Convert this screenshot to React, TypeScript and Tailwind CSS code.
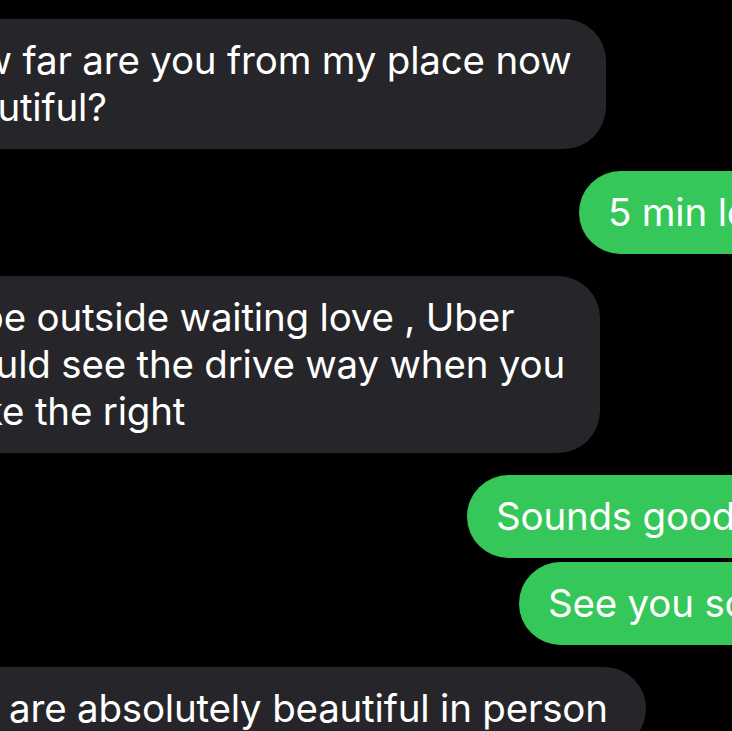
import React from "react";

type Line = { text: string; shift: number };

function Incoming({ lines, right }: { lines: Line[]; right: number }) {
  // bubble starts off-screen on the left, like the cropped screenshot
  return (
    <div
      className="shrink-0 self-start -ml-[100px] rounded-[42px] bg-[#262529] py-[18px] pl-[30px] overflow-hidden"
      style={{ width: right + 100 }}
    >
      {lines.map((l, i) => (
        <div key={i} className="whitespace-nowrap" style={{ marginLeft: l.shift }}>
          {l.text}
        </div>
      ))}
    </div>
  );
}

function Outgoing({ text, left }: { text: string; left: number }) {
  return (
    <div
      className="shrink-0 rounded-[42px] bg-[#35c759] py-[18px] pl-[29px] pr-[60px] whitespace-nowrap"
      style={{ marginLeft: left }}
    >
      {text}
    </div>
  );
}

export default function App() {
  return (
    <div
      className="w-[732px] h-[731px] overflow-hidden bg-black text-white flex flex-col pt-[19px]"
      style={{ fontFamily: "Inter, 'Noto Sans', sans-serif", fontSize: 38.5, lineHeight: "47px", letterSpacing: "-0.2px" }}
    >
      <Incoming
        right={606}
        lines={[
          { text: "How far are you from my place now", shift: 0 },
          { text: "beautiful?", shift: 0 },
        ]}
      />
      <div className="shrink-0 mt-[22px] w-[900px]">
        <Outgoing text="5 min left" left={579} />
      </div>
      <div className="shrink-0 mt-[22px] flex flex-col">
        <Incoming
          right={600}
          lines={[
            { text: "I'll be outside waiting love , Uber", shift: 0 },
            { text: "should see the drive way when you", shift: 0 },
            { text: "take the right", shift: 18 },
          ]}
        />
      </div>
      <div className="shrink-0 mt-[22px] w-[900px]">
        <Outgoing text="Sounds good" left={467} />
      </div>
      <div className="shrink-0 mt-[4px] w-[900px]">
        <Outgoing text="See you soon" left={519} />
      </div>
      <div className="shrink-0 mt-[22px] flex flex-col">
        <Incoming
          right={646}
          lines={[{ text: "You are absolutely beautiful in person", shift: 0 }]}
        />
      </div>
    </div>
  );
}
